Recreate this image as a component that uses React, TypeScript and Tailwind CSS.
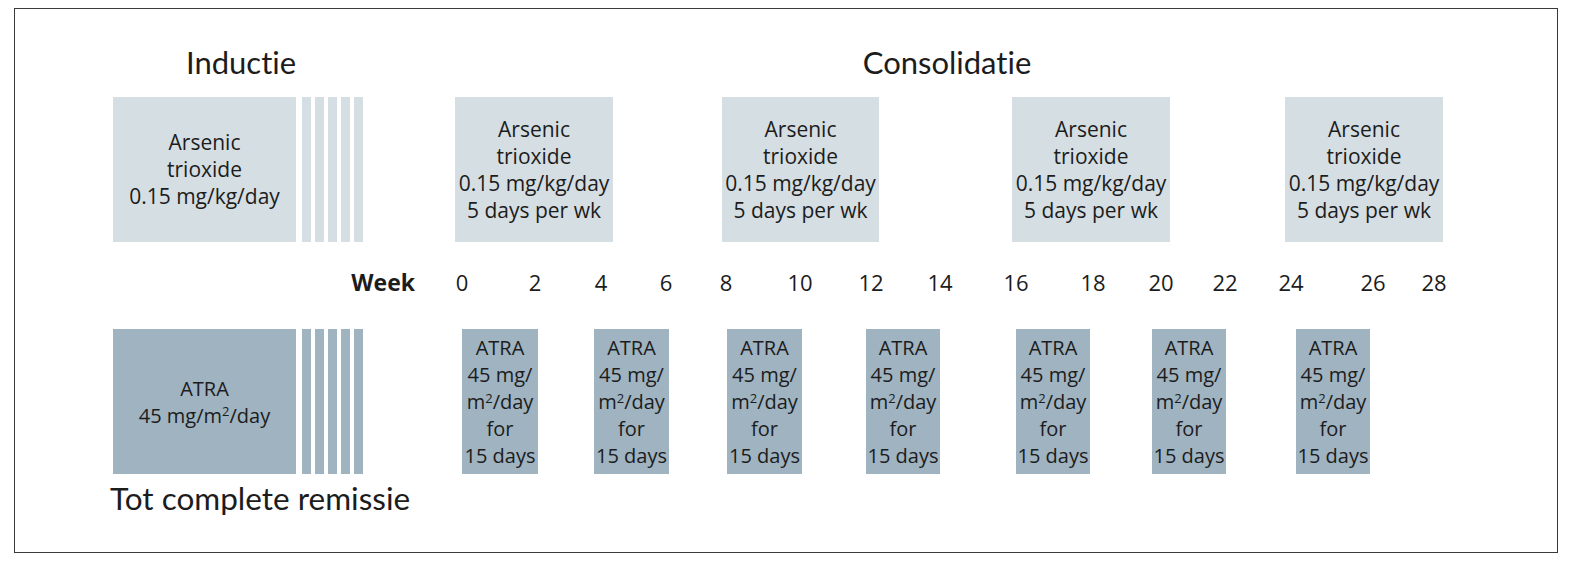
import React from "react";

const boxFont = { fontFamily: '"Open Sans", "Noto Sans", sans-serif' };
const titleFont = { fontFamily: 'Lato, "Open Sans", sans-serif' };

// consolidation arsenic blocks: margin from previous item + width
const arsenicBlocks = [
  "ml-[92px] w-[158px]",
  "ml-[109px] w-[157px]",
  "ml-[133px] w-[158px]",
  "ml-[115px] w-[158px]",
];

const atraBlocks = [
  "ml-[99px] w-[76px]",
  "ml-[56px] w-[75px]",
  "ml-[58px] w-[75px]",
  "ml-[64px] w-[74px]",
  "ml-[76px] w-[74px]",
  "ml-[62px] w-[74px]",
  "ml-[70px] w-[74px]",
];

// week ticks, each cell is 40px wide, centred on its week
const weeks = [
  { n: 0, cls: "ml-[27px]" },
  { n: 2, cls: "ml-[33px]" },
  { n: 4, cls: "ml-[26px]" },
  { n: 6, cls: "ml-[25px]" },
  { n: 8, cls: "ml-[20px]" },
  { n: 10, cls: "ml-[34px]" },
  { n: 12, cls: "ml-[31px]" },
  { n: 14, cls: "ml-[29px]" },
  { n: 16, cls: "ml-[36px]" },
  { n: 18, cls: "ml-[37px]" },
  { n: 20, cls: "ml-[28px]" },
  { n: 22, cls: "ml-[24px]" },
  { n: 24, cls: "ml-[26px]" },
  { n: 26, cls: "ml-[42px]" },
  { n: 28, cls: "ml-[21px]" },
];

function Stripes({ color }: { color: string }) {
  return (
    <div className="flex ml-[6px] gap-[4px] h-full">
      {[0, 1, 2, 3, 4].map((i) => (
        <div key={i} className={`w-[9px] h-full ${color}`} />
      ))}
    </div>
  );
}

function Sq() {
  return <sup className="text-[13px] leading-none">2</sup>;
}

export default function App() {
  return (
    <div className="bg-white w-[1573px] h-[568px] pt-[8px] pl-[14px]">
      <div className="w-[1544px] h-[545px] border border-[#3a3a3a] text-[#1c1c1c]">
        {/* titles */}
        <div
          className="flex h-[88px] pt-[35px] text-[31px] leading-[36px] [font-variant-ligatures:none]"
          style={titleFont}
        >
          <div className="ml-[98px] w-[256px] text-center">Inductie</div>
          <div className="ml-[388px] w-[380px] text-center">Consolidatie</div>
        </div>

        {/* arsenic trioxide row */}
        <div className="flex h-[145px] pl-[98px] text-[21px] leading-[27px]" style={boxFont}>
          <div className="w-[183px] bg-[#d5dee2] flex items-center justify-center text-center">
            <div>
              Arsenic
              <br />
              trioxide
              <br />
              0.15 mg/kg/day
            </div>
          </div>
          <Stripes color="bg-[#d5dee2]" />
          {arsenicBlocks.map((cls, i) => (
            <div key={i} className={`${cls} bg-[#d5dee2] flex items-center justify-center text-center whitespace-nowrap`}>
              <div>
                Arsenic
                <br />
                trioxide
                <br />
                0.15 mg/kg/day
                <br />5 days per wk
              </div>
            </div>
          ))}
        </div>

        {/* week axis */}
        <div className="flex h-[87px] pt-[26px] text-[22px] leading-[28px]" style={boxFont}>
          <div className="ml-[326px] w-[74px] text-right font-bold text-[23px]">Week</div>
          {weeks.map((w) => (
            <div key={w.n} className={`${w.cls} w-[40px] text-center`}>
              {w.n}
            </div>
          ))}
        </div>

        {/* ATRA row */}
        <div className="flex h-[145px] pl-[98px] text-[20px] leading-[27px]" style={boxFont}>
          <div className="w-[183px] bg-[#9fb3c1] flex items-center justify-center text-center">
            <div>
              ATRA
              <br />
              45 mg/m<Sq />/day
            </div>
          </div>
          <Stripes color="bg-[#9fb3c1]" />
          {atraBlocks.map((cls, i) => (
            <div key={i} className={`${cls} bg-[#9fb3c1] flex items-center justify-center text-center whitespace-nowrap`}>
              <div>
                ATRA
                <br />
                45 mg/
                <br />
                m<Sq />/day
                <br />
                for
                <br />
                15 days
              </div>
            </div>
          ))}
        </div>

        {/* footer */}
        <div className="pl-[95px] pt-[6px] text-[31.5px] leading-[36px]" style={titleFont}>
          Tot complete remissie
        </div>
      </div>
    </div>
  );
}
